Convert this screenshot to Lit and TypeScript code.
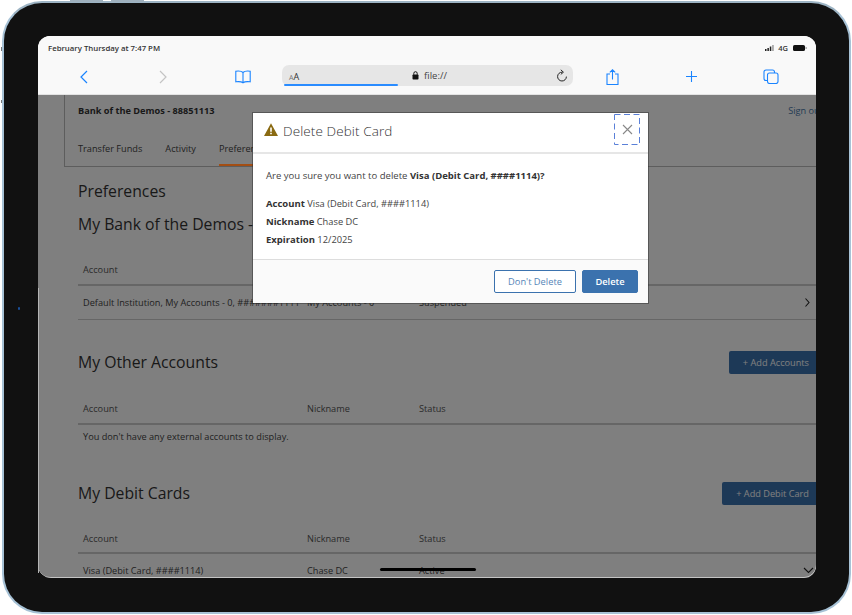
import { LitElement, html, css, svg } from "lit";
import { customElement } from "lit/decorators.js";

const chevronDown = svg`<path d="M1 1l4.500 4.500L10 1" fill="none" stroke="#222" stroke-width="1.100"/>`;

@customElement("app-root")
export class AppRoot extends LitElement {
  static styles = css`
    :host { display: block; width: 852px; height: 615px; background: #fff; overflow: hidden; font-family: "Open Sans", sans-serif; color: #333; }
    .canvas { width: 852px; height: 615px; position: relative; overflow: hidden; }
    .hw { position: absolute; background: #9fb0bd; }
    .hw.t1 { left: 70px; top: 0; width: 33px; height: 2px; }
    .hw.t2 { left: 111px; top: 0; width: 33px; height: 2px; }
    .hw.l1 { left: 1px; top: 47px; width: 1px; height: 4px; background: #777; }
    .hw.l2 { left: 1px; top: 100px; width: 1px; height: 3px; background: #777; }
    .hw.edge { left: 38px; top: 288px; width: 1px; height: 285px; background: #b5b5b5; z-index: 2; }
    .device { box-sizing: border-box; width: 849px; height: 613px; margin: 1px 0 0 2px; padding: 33px 34px 36px 34px; background: #111; border: 2px solid #a7c2d6; border-top-color: #9db4c4; border-radius: 40px; }
    .screen { position: relative; width: 778px; height: 541px; border-radius: 12px; overflow: hidden; background: #fff; display: flex; flex-direction: column; }
    .shell { border-radius: 12px; box-shadow: 1px 1px 0 #c4c4c4; }
    .camera { position: absolute; left: 18px; top: 307px; width: 2px; height: 3px; background: #1a4f9a; border-radius: 1px; z-index: 2; }

    .chrome { flex: none; height: 59px; background: #f9f9f9; border-bottom: 1px solid #e3e3e3; box-sizing: border-box; position: relative; z-index: 3; display: flex; flex-direction: column; }
    .status { height: 24px; padding: 0 9px 0 10px; display: flex; align-items: center; justify-content: space-between; font-size: 7.8px; font-weight: 600; color: #333; }
    .status-r { display: flex; align-items: center; gap: 3px; font-size: 7.5px; }
    .tools { flex: 1; position: relative; display: grid; grid-template-columns: 244px 291px 1fr; align-items: center; }
    .tools-l { display: flex; align-items: center; padding-left: 41px; margin-top: -1px; }
    .tools-r { display: flex; align-items: center; padding-left: 33px; gap: 65px; margin-top: -1px; }
    .fwd { margin-left: 69px; }
    .book { margin-left: 67px; }
    .plus { margin-left: 1px; }
    .tools svg { display: block; }
    .url { height: 21px; margin-top: -3px; background: #e6e6e6; border-radius: 7px; position: relative; display: grid; grid-template-columns: 1fr auto 1fr; align-items: center; font-size: 9px; color: #333; padding: 0 5px 0 7px; }
    .aa { font-size: 9px; line-height: 1; margin-top: 2px; }
    .aa small { font-size: 7px; color: #777; }
    .loc { display: flex; align-items: center; gap: 5px; font-size: 9.5px; color: #444; margin-left: 2px; }
    .reload { justify-self: end; display: block; }
    .progress { position: absolute; left: 2px; bottom: 0; width: 114px; height: 2px; border-radius: 1px; background: #2a8cff; }

    .page { flex: 1; position: relative; overflow: hidden; background: #fff; }
    .overlay { position: absolute; inset: 0; background: rgba(0,0,0,.5); z-index: 1; }
    .content { width: 830px; padding: 0 0 0 26px; box-sizing: border-box; }
    .card { width: 804px; height: 72px; border-left: 1px solid #bbb; border-bottom: 1px solid #bbb; box-sizing: border-box; padding: 9px 0 0 13px; }
    .bank { font-size: 9.2px; font-weight: 700; color: #333; line-height: 13px; display: flex; width: 745px; justify-content: space-between; }
    .sign { font-weight: 400; color: #4a78a8; }
    .tabs { display: flex; gap: 23px; margin-top: 13px; font-size: 9.2px; line-height: 38px; height: 36px; color: #444; }
    .tab.on { position: relative; height: 36px; }
    .tab.on::after { content: ""; position: absolute; left: 0; right: 0; bottom: 0; height: 2px; background: #a34e14; z-index: 2; }
    .wrap { padding-left: 14px; width: 752px; box-sizing: border-box; }
    h1, h2 { margin: 0; font-weight: 400; font-size: 15.750px; color: #333; line-height: 22px; }
    h1 { margin-top: 13px; }
    .h-mine { margin-top: 11px; }
    .sect { display: flex; justify-content: space-between; align-items: center; height: 24px; }
    .other { margin-top: 30px; }
    .cards { margin-top: 38px; }
    .add { background: #3b72ae; color: #fff; font-size: 9.2px; height: 23px; line-height: 23px; padding: 0 7px 0 14px; border-radius: 2px 0 0 2px; }
    .row { display: grid; grid-template-columns: 224px 112px 1fr auto; padding: 0 5px; font-size: 9.2px; color: #444; align-items: center; }
    .row.head { height: 41px; padding-bottom: 8px; align-items: end; border-bottom: 2px solid #ccc; box-sizing: content-box; color: #555; line-height: 13px; }
    .row.head.tight { height: 40px; padding-bottom: 7px; }
    .row.item { height: 33px; border-bottom: 1px solid #ccc; box-sizing: content-box; }
    .rt { display: block; }
    .dn { display: block; margin-right: -3px; }
    .none { font-size: 9.2px; color: #444; padding: 5px 5px 0; line-height: 13px; }

    .modal { position: absolute; left: 215px; top: 18px; width: 395px; height: 190px; background: #fff; z-index: 2; display: flex; flex-direction: column; box-shadow: 0 0 0 1px rgba(40,40,40,.45); }
    .m-head { height: 41px; box-sizing: border-box; border-bottom: 2px solid #e6e6e6; display: flex; align-items: center; padding: 0 8px 0 11px; gap: 5px; }
    .m-title { flex: 1; font-size: 13.500px; font-weight: 300; color: #333; letter-spacing: .1px; margin-top: -3px; }
    .warn { margin-top: -6px; }
    .close { position: relative; width: 26px; height: 31px; align-self: flex-start; margin-top: 1px; display: flex; align-items: center; justify-content: center; }
    .ring { position: absolute; inset: 0; }
    .m-body { flex: 1; padding: 13px 13px 0; font-size: 9.3px; line-height: 18px; color: #444; }
    .m-body b { font-weight: 700; font-size: 9.5px; color: #333; }
    .q { margin-bottom: 10px; font-size: 9.550px; }
    .m-foot { height: 44px; box-sizing: border-box; border-top: 1px solid #ddd; background: #fafafa; display: flex; justify-content: flex-end; align-items: center; gap: 6px; padding: 0 10px; }
    .btn { box-sizing: border-box; height: 23px; font-size: 9.300px; line-height: 21px; text-align: center; border-radius: 2px; border: 1px solid #3b72ae; }
    .ghost { width: 82px; background: #fff; color: #5585b8; }
    .solid { width: 56px; background: #3b72ae; color: #fff; font-weight: 600; }
    .home { position: absolute; left: 342px; bottom: 6px; width: 96px; height: 3px; border-radius: 2px; background: #000; z-index: 4; }
  `;

  private head(tight = false) {
    return html`<div class="row head ${tight ? "tight" : ""}"><span>Account</span><span>Nickname</span><span>Status</span><span></span></div>`;
  }

  render() {
    return html`<div class="canvas">
      <div class="hw t1"></div><div class="hw t2"></div><div class="hw l1"></div><div class="hw l2"></div><div class="hw edge"></div>
      <div class="camera"></div>
      <div class="device">
        <div class="shell">
        <div class="screen">
          <div class="chrome">
            <div class="status">
              <span>February Thursday at 7:47 PM</span>
              <span class="status-r">
                <svg width="10" height="6" viewBox="0 0 10 6"><rect x="0" y="4" width="1.500" height="2" fill="#222"/><rect x="2.400" y="3" width="1.500" height="3" fill="#222"/><rect x="4.800" y="1.500" width="1.500" height="4.500" fill="#222"/><rect x="7.200" y="0" width="1.500" height="6" fill="#999"/></svg>
                <span>4G</span>
                <svg width="14" height="6" viewBox="0 0 14 6" style="margin-left:2px"><rect x="0" y="0" width="12" height="6" rx="1.600" fill="#111"/><rect x="12.600" y="2" width="1" height="2" fill="#888"/></svg>
              </span>
            </div>
            <div class="tools">
              <div class="tools-l">
                <svg width="10" height="14" viewBox="0 0 10 14"><path d="M8 1L2 7l6 6" fill="none" stroke="#1a84ff" stroke-width="1.200"/></svg>
                <svg class="fwd" width="10" height="14" viewBox="0 0 10 14"><path d="M2 1l6 6-6 6" fill="none" stroke="#c4c4c4" stroke-width="1.200"/></svg>
                <svg class="book" width="16" height="14" viewBox="0 0 16 14"><path d="M8 2.500C6.600 1 3.800.8 .8 1.200v10.600c3-.4 5.700-.2 7.200 1 1.500-1.200 4.200-1.400 7.200-1V1.200C12.200 .8 9.400 1 8 2.500zM8 2.500v10.300" fill="none" stroke="#1a84ff" stroke-width="1.100"/></svg>
              </div>
              <div class="url">
                <span class="aa"><small>A</small>A</span>
                <span class="loc">
                  <svg width="7" height="9" viewBox="0 0 7 9"><rect x="0.500" y="3.500" width="6" height="5" rx=".8" fill="#111"/><path d="M1.800 3.800V2.400a1.700 1.700 0 0 1 3.400 0v1.400" fill="none" stroke="#111" stroke-width="1"/></svg>
                  file://
                </span>
                <svg class="reload" width="12" height="14" viewBox="0 0 12 14"><path d="M6.300 3.200A4.400 4.400 0 1 0 10.400 7.600" fill="none" stroke="#222" stroke-width="1"/><path d="M4.800.8l2.600 2.400-2.600 2.200" fill="none" stroke="#222" stroke-width="1"/></svg>
                <div class="progress"></div>
              </div>
              <div class="tools-r">
                <svg width="13" height="16" viewBox="0 0 13 16"><path d="M4 5H1v10.500h11V5H9M6.500 10.500V1M3.800 3.300L6.500 .8l2.700 2.500" fill="none" stroke="#1a84ff" stroke-width="1.100"/></svg>
                <svg class="plus" width="13" height="13" viewBox="0 0 13 13"><path d="M6.500 1v11M1 6.500h11" fill="none" stroke="#1a84ff" stroke-width="1.100"/></svg>
                <svg width="16" height="15" viewBox="0 0 16 15"><rect x="4.500" y="4" width="10.500" height="10.500" rx="2" fill="none" stroke="#1a84ff" stroke-width="1.100"/><path d="M4.500 11.500H3a2 2 0 0 1-2-2V3a2 2 0 0 1 2-2h6.500a2 2 0 0 1 2 2v1" fill="none" stroke="#1a84ff" stroke-width="1.100"/></svg>
              </div>
            </div>
          </div>
          <div class="page">
            <div class="content">
              <div class="card">
                <div class="bank"><span>Bank of the Demos - 88851113</span><span class="sign">Sign out</span></div>
                <div class="tabs"><span>Transfer Funds</span><span>Activity</span><span class="tab on">Preferences</span></div>
              </div>
              <div class="wrap">
                <h1>Preferences</h1>
                <h2 class="h-mine">My Bank of the Demos - 88851113</h2>
                ${this.head()}
                <div class="row item"><span>Default Institution, My Accounts - 0, #######1111</span><span>My Accounts - 0</span><span>Suspended</span>
                  <svg class="rt" width="7" height="11" viewBox="0 0 7 11"><path d="M1.500 1.500l3.500 4-3.500 4" fill="none" stroke="#222" stroke-width="1.100"/></svg></div>
                <div class="sect other"><h2>My Other Accounts</h2><span class="add">+ Add Accounts</span></div>
                ${this.head()}
                <div class="none">You don't have any external accounts to display.</div>
                <div class="sect cards"><h2>My Debit Cards</h2><span class="add">+ Add Debit Card</span></div>
                ${this.head(true)}
                <div class="row item"><span>Visa (Debit Card, ####1114)</span><span>Chase DC</span><span>Active</span>
                  <svg class="dn" width="11" height="7" viewBox="0 0 11 7">${chevronDown}</svg></div>
              </div>
            </div>
            <div class="overlay"></div>
            <div class="modal">
              <div class="m-head">
                <svg class="warn" width="14" height="13" viewBox="0 0 14 13"><path fill-rule="evenodd" d="M7 .3L14 13H0zM6.200 4.500v4.300h1.600V4.500zM6.200 9.800v1.500h1.600V9.800z" fill="#8a6a12"/></svg>
                <div class="m-title">Delete Debit Card</div>
                <div class="close">
                  <svg class="ring" width="26" height="31" viewBox="0 0 26 31"><rect x=".5" y=".5" width="25" height="30" fill="none" stroke="#5a80d8" stroke-width="1" stroke-dasharray="6 3.500"/></svg>
                  <svg width="11" height="11" viewBox="0 0 11 11"><path d="M1 1l9 9M10 1l-9 9" stroke="#888" stroke-width="1.100"/></svg>
                </div>
              </div>
              <div class="m-body">
                <div class="q">Are you sure you want to delete <b>Visa (Debit Card, ####1114)?</b></div>
                <div><b>Account</b> Visa (Debit Card, ####1114)</div>
                <div><b>Nickname</b> Chase DC</div>
                <div><b>Expiration</b> 12/2025</div>
              </div>
              <div class="m-foot"><div class="btn ghost">Don't Delete</div><div class="btn solid">Delete</div></div>
            </div>
          </div>
          <div class="home"></div>
        </div>
        </div>
      </div>
    </div>`;
  }
}
